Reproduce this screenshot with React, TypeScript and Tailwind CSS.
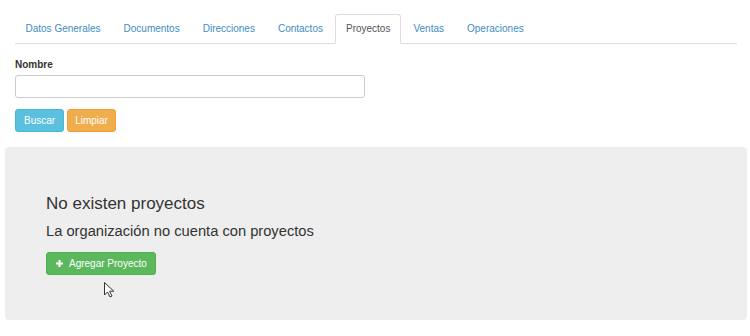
import React from 'react';

const tabs = ['Datos Generales', 'Documentos', 'Direcciones', 'Contactos', 'Proyectos', 'Ventas', 'Operaciones'];

const App = () => {
    const active = 'Proyectos';

    return (
        <div className="relative w-[750px] h-[336px] bg-white text-[#333] font-['Liberation_Sans',Arial,sans-serif] pt-[14px] overflow-hidden">
            {/* tabs */}
            <ul className="flex ml-[15px] mr-[13px] border-b border-[#ddd]">
                {tabs.map((t) => (
                    <li key={t} className="mr-[2px] -mb-px">
                        {t === active ? (
                            <span className="block px-[9.5px] py-[7px] text-[10px] leading-[14px] text-[#555] bg-white border border-[#ddd] border-b-transparent rounded-t-[3px]">
                                {t}
                            </span>
                        ) : (
                            <span className="block px-[9.5px] py-[7px] text-[10px] leading-[14px] text-[#3d8cc4] border border-transparent">
                                {t}
                            </span>
                        )}
                    </li>
                ))}
            </ul>

            {/* search form */}
            <div className="px-[15px] mt-[14px]">
                <label className="block text-[10px] leading-[14px] font-bold text-[#333]">Nombre</label>
                <input className="block mt-[3px] w-[350px] h-[23px] border border-[#ccc] rounded-[3px] bg-white" />
                <div className="flex gap-[3px] mt-[11px]">
                    <button className="h-[23px] px-[8px] text-[10px] text-white bg-[#5bc0de] border border-[#46b8da] rounded-[3px]">
                        Buscar
                    </button>
                    <button className="h-[23px] px-[7px] text-[10px] text-white bg-[#f0ad4e] border border-[#eea236] rounded-[3px]">
                        Limpiar
                    </button>
                </div>
            </div>

            {/* empty state */}
            <div className="ml-[5px] mr-[3px] mt-[15px] bg-[#eee] rounded-[4px] pl-[41px] pt-[47px] pb-[45px]">
                <h3 className="text-[17px] leading-[19px] text-[#333]">No existen proyectos</h3>
                <p className="mt-[8px] text-[14.7px] leading-[21px] text-[#333]">La organización no cuenta con proyectos</p>
                <button className="mt-[10px] flex items-center gap-[6px] h-[23px] pl-[9px] pr-[8px] text-[10px] text-white bg-[#5cb85c] border border-[#4cae4c] rounded-[3px]">
                    <svg width="7" height="7" viewBox="0 0 7 7">
                        <path d="M2.5 0h2v2.5H7v2H4.5V7h-2V4.5H0v-2h2.5z" fill="white" />
                    </svg>
                    Agregar Proyecto
                </button>
            </div>

            {/* mouse cursor */}
            <svg className="absolute left-[104px] top-[282px]" width="11" height="16" viewBox="0 0 11 16">
                <path d="M0.5 0.5 L0.5 13 L3.5 10 L6 15 L8 14 L5.5 9.2 L9.8 9.2 Z" fill="white" stroke="#333" strokeWidth="1" strokeLinejoin="round" />
            </svg>
        </div>
    );
};

export default App;
